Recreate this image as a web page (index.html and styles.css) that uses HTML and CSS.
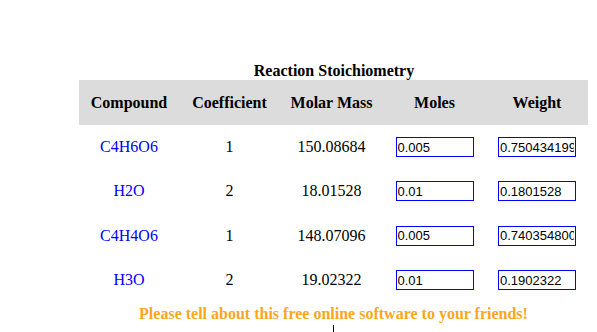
FILE: index.html
```html
<!DOCTYPE html>
<html>
<head>
<meta charset="utf-8">
<link rel="stylesheet" href="styles.css">
</head>
<body>
<div class="page">
  <table class="stoich">
    <caption class="cap">Reaction Stoichiometry</caption>
    <thead>
      <tr class="head">
        <th class="c1">Compound</th>
        <th class="c2">Coefficient</th>
        <th class="c3">Molar Mass</th>
        <th class="c4">Moles</th>
        <th class="c5">Weight</th>
      </tr>
    </thead>
    <tbody>
      <tr>
        <td class="cmp">C4H6O6</td>
        <td>1</td>
        <td>150.08684</td>
        <td><input class="box" type="text" value="0.005"></td>
        <td><input class="box" type="text" value="0.750434199999"></td>
      </tr>
      <tr>
        <td class="cmp">H2O</td>
        <td>2</td>
        <td>18.01528</td>
        <td><input class="box" type="text" value="0.01"></td>
        <td><input class="box" type="text" value="0.1801528"></td>
      </tr>
      <tr class="r45">
        <td class="cmp">C4H4O6</td>
        <td>1</td>
        <td>148.07096</td>
        <td><input class="box" type="text" value="0.005"></td>
        <td><input class="box" type="text" value="0.740354800000"></td>
      </tr>
      <tr>
        <td class="cmp">H3O</td>
        <td>2</td>
        <td>19.02322</td>
        <td><input class="box" type="text" value="0.01"></td>
        <td><input class="box" type="text" value="0.1902322"></td>
      </tr>
    </tbody>
  </table>
  <p class="share">Please tell about this free online software to your friends!</p>
  <div class="rule"></div>
</div>
</body>
</html>
```
FILE: styles.css
```css
html, body {
  margin: 0;
  padding: 0;
  background: #ffffff;
}
.page {
  width: 509px;
  margin-left: 79px;
  padding-top: 62px;
  font-family: "Liberation Serif", "Times New Roman", serif;
  font-size: 16px;
  color: #000;
}
.stoich {
  width: 509px;
  border-collapse: collapse;
  border-spacing: 0;
  table-layout: fixed;
}
.cap {
  font-weight: bold;
  line-height: 18px;
  text-align: center;
  padding-left: 1px;
}
.head {
  background: #dcdcdc;
}
.head th {
  height: 45px;
  padding: 0;
  font-weight: bold;
  line-height: 18px;
  text-align: center;
  vertical-align: middle;
}
.c1 { width: 100px; }
.c2 { width: 101px; }
.c3 { width: 103px; }
.c4 { width: 103px; }
.c5 { width: 102px; }
.stoich td {
  height: 44px;
  padding: 0;
  text-align: center;
  vertical-align: middle;
  line-height: 18px;
}
.stoich .r45 td {
  height: 45px;
}
.cmp {
  color: #0000ff;
}
.box {
  box-sizing: border-box;
  width: 78px;
  height: 20px;
  margin: 0;
  padding: 0 1px;
  border: 1px solid #0000ff;
  font-family: "Liberation Sans", Arial, sans-serif;
  font-size: 13px;
  color: #000;
  background: #fff;
  vertical-align: middle;
}
.share {
  margin: 3px 0 0 0;
  color: #fba61c;
  font-weight: bold;
  text-align: center;
  line-height: 18px;
}
.rule {
  width: 1px;
  height: 12px;
  margin: 2px 0 0 254px;
  background: #000;
}
```
